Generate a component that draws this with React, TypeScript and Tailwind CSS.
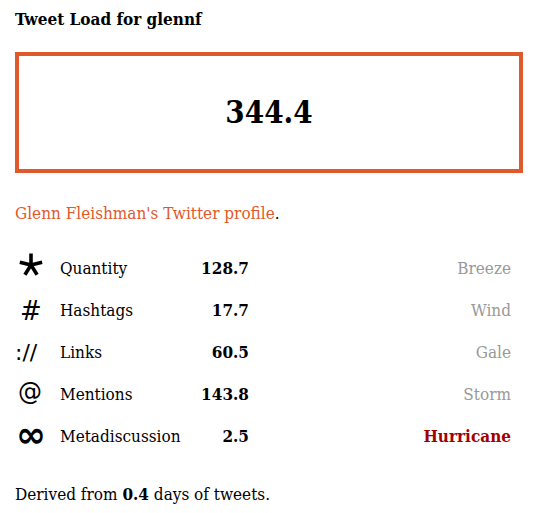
import React from 'react';

const rows = [
  { icon: '*', label: 'Quantity', value: '128.7', level: 'Breeze' },
  { icon: '#', label: 'Hashtags', value: '17.7', level: 'Wind' },
  { icon: '://', label: 'Links', value: '60.5', level: 'Gale' },
  { icon: '@', label: 'Mentions', value: '143.8', level: 'Storm' },
  { icon: '∞', label: 'Metadiscussion', value: '2.5', level: 'Hurricane' },
];

const iconClass: Record<string, string> = {
  '#': 'text-[26px] leading-none pl-[5px]',
  '://': 'text-[22px] leading-none',
  '@': 'text-[24px] leading-none pl-[3px] -mt-[6px]',
  '∞': 'text-[36px] font-bold leading-none pl-[1px] -mt-[4px]',
};

// five-armed asterisk
const Asterisk = () => {
  const angles = [-90, -14, 58, 122, 194];
  return (
    <svg width="26" height="26" viewBox="0 0 26 26" className="ml-[3px] -mt-[8px]">
      {angles.map((a) => {
        const r = (a * Math.PI) / 180;
        return (
          <line
            key={a}
            x1="13"
            y1="13"
            x2={13 + Math.cos(r) * 11.5}
            y2={13 + Math.sin(r) * 11.5}
            stroke="black"
            strokeWidth="3.6"
          />
        );
      })}
    </svg>
  );
};

const App: React.FC = () => {
  return (
    <div className="w-[533px] min-h-[513px] bg-white px-[15px] pt-[8px] text-[17px] text-black font-['DejaVu_Serif_Condensed',serif]">
      <h1 className="font-bold text-[17px] leading-[22px]">Tweet Load for glennf</h1>

      <div className="mt-[22px] h-[121px] w-[508px] border-[4px] border-[#e0592c] flex items-center justify-center">
        <span className="font-bold text-[31px]">344.4</span>
      </div>

      <p className="mt-[29px] leading-[22px]">
        <a href="#" className="text-[#e0592c]">Glenn Fleishman's Twitter profile</a>.
      </p>

      <div className="mt-[24px] flex flex-col">
        {rows.map((r) => (
          <div key={r.label} className="flex items-center h-[42px]">
            <div className={`w-[45px] shrink-0 font-['DejaVu_Sans',sans-serif] ${iconClass[r.icon] ?? ''}`}>
              {r.icon === '*' ? <Asterisk /> : r.icon}
            </div>
            <div className="flex-1 max-w-[130px]">{r.label}</div>
            <div className="w-[59px] text-right font-bold">{r.value}</div>
            <div
              className={`w-[262px] text-right ${
                r.level === 'Hurricane' ? 'text-[#a30000] font-bold' : 'text-[#999]'
              }`}
            >
              {r.level}
            </div>
          </div>
        ))}
      </div>

      <p className="mt-[25px] leading-[22px]">
        Derived from <b>0.4</b> days of tweets.
      </p>
    </div>
  );
};

export default App;
